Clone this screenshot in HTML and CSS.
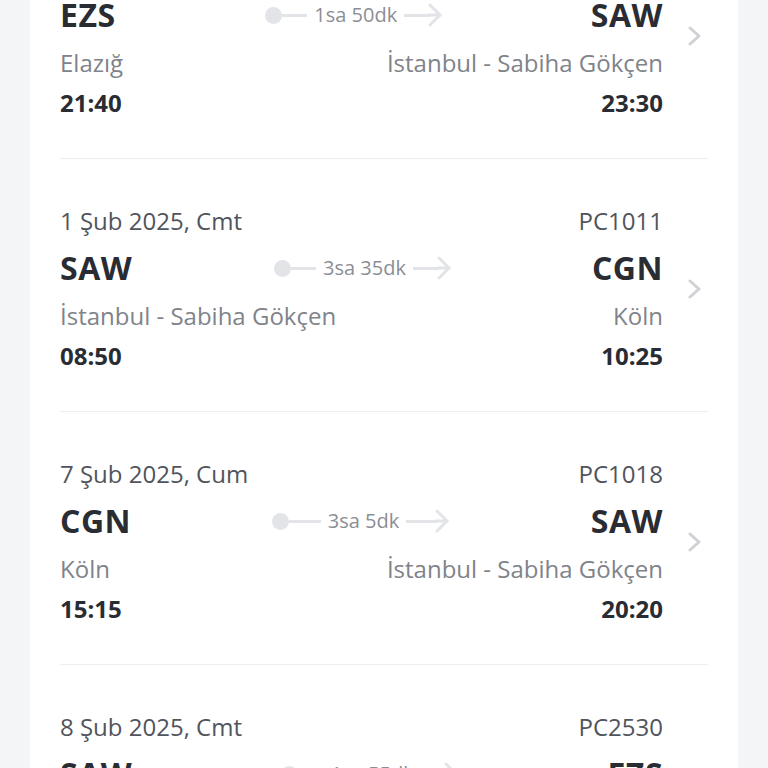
FILE: index.html
```html
<!DOCTYPE html>
<html lang="tr">
<head>
<meta charset="utf-8">
<title>Uçuşlar</title>
<link rel="stylesheet" href="styles.css">
</head>
<body>
<div class="page">
  <div class="card">
    <div class="flight">
      <div class="info">
        <div class="meta"><span>25 Oca 2025, Cmt</span><span>PC2531</span></div>
        <div class="route">
          <span class="code">EZS</span>
          <div class="mid"><div class="track"><span class="dot"></span><span class="line"></span><span class="dur">1sa 50dk</span><span class="line"></span><svg class="head" width="14" height="24" viewBox="0 0 14 24"><line x1="0" y1="12" x2="12" y2="12"/><polyline points="2,2 12,12 2,22"/></svg></div></div>
          <span class="code">SAW</span>
        </div>
        <div class="cities"><span>Elazığ</span><span>İstanbul - Sabiha Gökçen</span></div>
        <div class="times"><span>21:40</span><span>23:30</span></div>
      </div>
      <svg class="chev" width="14" height="20" viewBox="0 0 14 20"><polyline points="2,2 11,10 2,18"/></svg>
    </div>
    <div class="flight">
      <div class="info">
        <div class="meta"><span>1 Şub 2025, Cmt</span><span>PC1011</span></div>
        <div class="route">
          <span class="code">SAW</span>
          <div class="mid"><div class="track"><span class="dot"></span><span class="line"></span><span class="dur">3sa 35dk</span><span class="line"></span><svg class="head" width="14" height="24" viewBox="0 0 14 24"><line x1="0" y1="12" x2="12" y2="12"/><polyline points="2,2 12,12 2,22"/></svg></div></div>
          <span class="code">CGN</span>
        </div>
        <div class="cities"><span>İstanbul - Sabiha Gökçen</span><span>Köln</span></div>
        <div class="times"><span>08:50</span><span>10:25</span></div>
      </div>
      <svg class="chev" width="14" height="20" viewBox="0 0 14 20"><polyline points="2,2 11,10 2,18"/></svg>
    </div>
    <div class="flight">
      <div class="info">
        <div class="meta"><span>7 Şub 2025, Cum</span><span>PC1018</span></div>
        <div class="route">
          <span class="code">CGN</span>
          <div class="mid"><div class="track"><span class="dot"></span><span class="line"></span><span class="dur">3sa 5dk</span><span class="line"></span><svg class="head" width="14" height="24" viewBox="0 0 14 24"><line x1="0" y1="12" x2="12" y2="12"/><polyline points="2,2 12,12 2,22"/></svg></div></div>
          <span class="code">SAW</span>
        </div>
        <div class="cities"><span>Köln</span><span>İstanbul - Sabiha Gökçen</span></div>
        <div class="times"><span>15:15</span><span>20:20</span></div>
      </div>
      <svg class="chev" width="14" height="20" viewBox="0 0 14 20"><polyline points="2,2 11,10 2,18"/></svg>
    </div>
    <div class="flight">
      <div class="info">
        <div class="meta"><span>8 Şub 2025, Cmt</span><span>PC2530</span></div>
        <div class="route">
          <span class="code">SAW</span>
          <div class="mid"><div class="track"><span class="dot"></span><span class="line"></span><span class="dur">1sa 55dk</span><span class="line"></span><svg class="head" width="14" height="24" viewBox="0 0 14 24"><line x1="0" y1="12" x2="12" y2="12"/><polyline points="2,2 12,12 2,22"/></svg></div></div>
          <span class="code">EZS</span>
        </div>
        <div class="cities"><span>İstanbul - Sabiha Gökçen</span><span>Elazığ</span></div>
        <div class="times"><span>18:30</span><span>20:25</span></div>
      </div>
      <svg class="chev" width="14" height="20" viewBox="0 0 14 20"><polyline points="2,2 11,10 2,18"/></svg>
    </div>
  </div>
</div>
</body>
</html>
```
FILE: styles.css
```css
html, body {
  margin: 0;
  padding: 0;
  background: #f4f5f7;
  font-family: "Open Sans", "Noto Sans", sans-serif;
  overflow: hidden;
}
.page {
  height: 768px;
  overflow: hidden;
}
.card {
  margin: -94px 30px 0 30px;
  background: #ffffff;
  padding: 0 30px;
}
.flight {
  display: grid;
  grid-template-columns: 1fr 45px;
  align-items: center;
  padding: 47px 0 39px 0;
  border-bottom: 1px solid #eceef1;
  box-shadow: 0 1px 2px rgba(0, 0, 0, 0.015);
}
.info {
  display: flex;
  flex-direction: column;
}
.meta {
  display: flex;
  justify-content: space-between;
  font-size: 24px;
  line-height: 30px;
  color: #51545b;
}
.route {
  display: flex;
  align-items: center;
  margin-top: 10px;
  height: 44px;
}
.code {
  font-size: 32px;
  line-height: 44px;
  font-weight: 700;
  color: #2a2c33;
  letter-spacing: 0.5px;
}
.mid {
  flex: 1;
  display: flex;
  justify-content: center;
}
.track {
  width: 177px;
  display: flex;
  align-items: center;
}
.dot {
  width: 17px;
  height: 17px;
  border-radius: 50%;
  background: #e2e4e8;
  flex: none;
}
.line {
  flex: 1;
  height: 3px;
  background: #e2e4e8;
}
.dur {
  font-size: 20px;
  line-height: 24px;
  color: #8b8e94;
  padding: 0 7px;
}
.head {
  flex: none;
  margin-left: -2px;
  fill: none;
  stroke: #e2e4e8;
  stroke-width: 3;
  stroke-linecap: round;
  stroke-linejoin: round;
}
.cities {
  display: flex;
  justify-content: space-between;
  margin-top: 8px;
  font-size: 24px;
  line-height: 36px;
  color: #80838a;
}
.times {
  display: flex;
  justify-content: space-between;
  margin-top: 6px;
  font-size: 24px;
  line-height: 32px;
  font-weight: 700;
  color: #2a2c33;
}
.chev {
  justify-self: end;
  margin-right: 6px;
  fill: none;
  stroke: #cfd1d5;
  stroke-width: 3;
  stroke-linecap: round;
  stroke-linejoin: round;
}
```
